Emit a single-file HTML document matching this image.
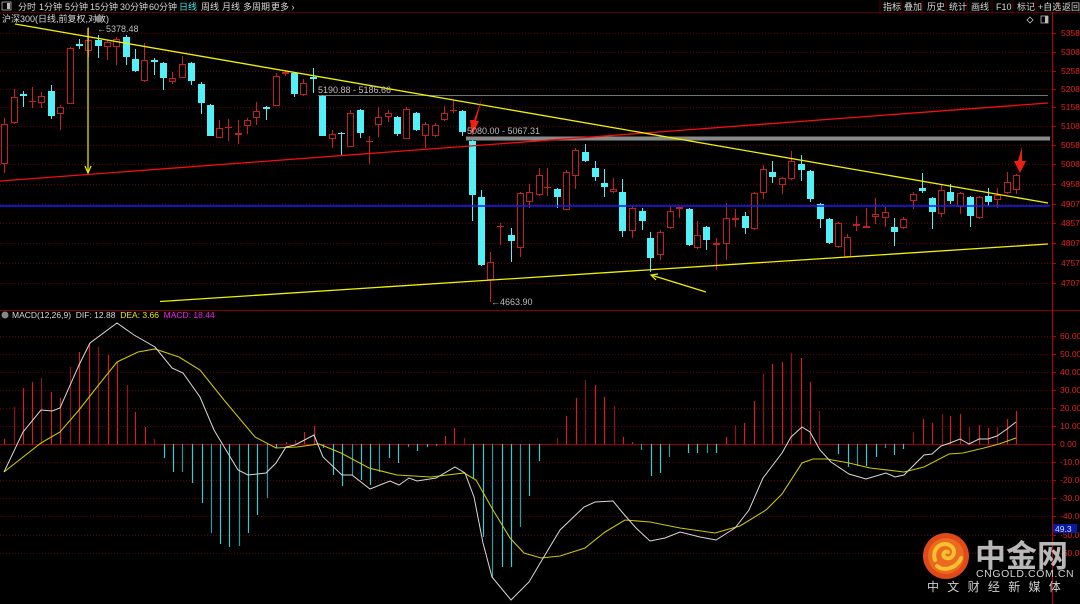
<!DOCTYPE html>
<html><head><meta charset="utf-8"><style>
html,body{margin:0;padding:0;background:#000;width:1080px;height:604px;overflow:hidden}
body{font-family:"Liberation Sans","Noto Sans CJK SC",sans-serif}
svg text{font-family:"Liberation Sans","Noto Sans CJK SC",sans-serif}
</style></head><body>
<svg id="s" width="1080" height="604" viewBox="0 0 1080 604" xmlns="http://www.w3.org/2000/svg">
<rect width="1080" height="604" fill="#000"/>
<g id="grid"></g>
<g id="bars"></g>
<g id="candles"></g>
<g id="over">
 <rect x="0" y="0" width="1080" height="12" fill="#000"/>
 <line x1="0" y1="12.5" x2="1080" y2="12.5" stroke="#5a0000"/>
 <rect x="2" y="2" width="9" height="8" fill="none" stroke="#bbb" stroke-width="0.8"/>
 <rect x="7" y="3" width="3" height="6" fill="#bbb"/>
 <g font-size="9" fill="#d8d8d8">
  <text x="18" y="10">分时</text><text x="39" y="10">1分钟</text><text x="65" y="10">5分钟</text><text x="90" y="10">15分钟</text><text x="120" y="10">30分钟</text><text x="149" y="10">60分钟</text>
  <text x="179" y="10" fill="#3ee8ee">日线</text><text x="201" y="10">周线</text><text x="222" y="10">月线</text><text x="243" y="10">多周期</text><text x="271" y="10">更多 ›</text>
 </g>
 <g font-size="9" fill="#d8d8d8" stroke="#5a0000">
  <line x1="880" y1="0" x2="880" y2="12"/><line x1="901" y1="0" x2="901" y2="12"/><line x1="922" y1="0" x2="922" y2="12"/><line x1="946" y1="0" x2="946" y2="12"/><line x1="967" y1="0" x2="967" y2="12"/><line x1="992" y1="0" x2="992" y2="12"/><line x1="1013" y1="0" x2="1013" y2="12"/><line x1="1036" y1="0" x2="1036" y2="12"/><line x1="1059" y1="0" x2="1059" y2="12"/>
  <text x="883" y="10" stroke="none">指标</text><text x="904" y="10" stroke="none">叠加</text><text x="927" y="10" stroke="none">历史</text><text x="949" y="10" stroke="none">统计</text><text x="971" y="10" stroke="none">画线</text><text x="996" y="10" stroke="none">F10</text><text x="1017" y="10" stroke="none">标记</text><text x="1038" y="10" stroke="none">+自选</text><text x="1062" y="10" stroke="none">返回</text>
 </g>
 <text x="2" y="22" font-size="9" fill="#d8d8d8">沪深300(日线,前复权,对数)</text>
 <circle cx="99" cy="19" r="3.5" fill="#888"/>
 <path d="M1030 17 l3 3 -3 3 -3 -3z" fill="none" stroke="#bbb" stroke-width="0.8"/>
 <rect x="1041" y="16" width="7" height="7" fill="none" stroke="#bbb" stroke-width="0.8"/><rect x="1045" y="16" width="3" height="7" fill="#bbb"/>
 <line x1="318" y1="95.5" x2="1048" y2="95.5" stroke="#9a9a9a" stroke-width="0.8"/>
 <rect x="466" y="136.5" width="584" height="4" fill="#8a8a8a"/>
 <line x1="0" y1="206" x2="1050" y2="206" stroke="#1020ff" stroke-width="1.5"/>
 <line x1="0" y1="181" x2="1048" y2="103" stroke="#f01010" stroke-width="1.3"/>
 <line x1="15" y1="24" x2="1048" y2="203" stroke="#f0f000" stroke-width="1.3"/>
 <line x1="160" y1="301.5" x2="1048" y2="244" stroke="#f0f000" stroke-width="1.3"/>
 <line x1="88" y1="28" x2="88" y2="172" stroke="#f0f000" stroke-width="1.2"/>
 <path d="M85 166 L88 173 L91 166" fill="none" stroke="#f0f000" stroke-width="1.2"/>
 <line x1="706" y1="292" x2="651" y2="275" stroke="#f0f000" stroke-width="1.3"/>
 <path d="M658 274 L651 275 L656 280" fill="none" stroke="#f0f000" stroke-width="1.2"/>
 <path d="M482 98 L476 121 L479 121 L472 136 L470 120 L474 120 Z" fill="#f02010"/>
 <path d="M1022 147 L1022 161 L1026 161 L1020 173 L1014 161 L1018 161 Z" fill="#f02010"/>
 <g font-size="9" fill="#bdbdbd">
  <text x="97" y="32">←5378.48</text>
  <text x="318" y="93">5190.88 - 5186.66</text>
  <text x="467" y="134">5080.00 - 5067.31</text>
  <text x="491" y="305">←4663.90</text>
 </g>
 <line x1="0" y1="310.5" x2="1080" y2="310.5" stroke="#8a0000"/>
 <line x1="1052.5" y1="12" x2="1052.5" y2="604" stroke="#c00000"/>
 <circle cx="5" cy="315" r="3.5" fill="#888"/>
 <text x="12" y="318" font-size="8.5" fill="#d8d8d8">MACD(12,26,9) &#160;DIF: 12.88 &#160;<tspan fill="#e8e800">DEA: 3.66</tspan> &#160;<tspan fill="#ee22ee">MACD: 18.44</tspan></text>
 <rect x="1053" y="524" width="24" height="9" fill="#0a1aa0"/>
 <text x="1055" y="532" font-size="8.5" fill="#d8d8ff">49.3</text>
 <circle cx="946" cy="556" r="23" fill="#e04a18"/>
 <circle cx="946" cy="556" r="18" fill="#ea6a20"/>
 <path d="M935 560 C931 548 943 540 951 546 C957 551 953 560 946 558 C941 556 944 550 948 552 M937 566 C944 572 957 568 961 558" fill="none" stroke="#f7c030" stroke-width="4" stroke-linecap="round"/>
 <text x="975" y="567" font-size="31" font-weight="bold" fill="#b8b8b8" font-family="'Noto Sans CJK SC',sans-serif">中金网</text>
 <text x="976" y="577" font-size="10.5" fill="#d0d0d0" letter-spacing="0.6">CNGOLD.COM.CN</text>
 <text x="927" y="591" font-size="12" fill="#d0d0d0" letter-spacing="8.3" font-family="'Noto Sans CJK SC',sans-serif">中文财经新媒体</text>
</g>
</svg>
<script>
var NS="http://www.w3.org/2000/svg";
function el(p,t,a){var e=document.createElementNS(NS,t);for(var k in a)e.setAttribute(k,a[k]);p.appendChild(e);return e;}
var G=document.getElementById('grid');
var pl=[[33,5358],[52,5308],[71,5258],[89,5208],[107,5158],[126,5108],[145,5058],[164,5008],[184,4958],[204,4907],[223,4857],[243,4807],[263,4757],[283,4707]];
pl.forEach(function(p){el(G,'line',{x1:0,y1:p[0]+.5,x2:1052,y2:p[0]+.5,stroke:'#6a0000','stroke-dasharray':'1,2'});el(G,'line',{x1:1052,y1:p[0]+.5,x2:1056,y2:p[0]+.5,stroke:'#c00000'});var t=el(G,'text',{x:1061,y:p[0]+3,'font-size':8.5,fill:'#e02020'});t.textContent=p[1];});
var ml=[[336,'60.00'],[354,'50.00'],[372,'40.00'],[390,'30.00'],[408,'20.00'],[426,'10.00'],[444,'0.00'],[462,'-10.00'],[480,'-20.00'],[498,'-30.00'],[516,'-40.00'],[535,'-50.00'],[553,'-60.00']];
ml.forEach(function(p){if(p[0]!=444)el(G,'line',{x1:0,y1:p[0]+.5,x2:1052,y2:p[0]+.5,stroke:'#6a0000','stroke-dasharray':'1,2'});el(G,'line',{x1:1052,y1:p[0]+.5,x2:1056,y2:p[0]+.5,stroke:'#c00000'});var t=el(G,'text',{x:1060,y:p[0]+3,'font-size':8.5,fill:'#e02020'});t.textContent=p[1];});
el(G,'line',{x1:0,y1:444.5,x2:1052,y2:444.5,stroke:'#a00000'});
var C=[[4,'r',124,164,118,173],[14,'r',97,123,89,124],[23,'c',94,96,91,107],[32,'x',101,101,87,108],[41,'r',96,103,92,108],[51,'c',91,116,85,119],[60,'r',107,114,105,130],[70,'r',48,104,47,104],[79,'c',44,46,39,49],[88,'r',40,51,27,57],[98,'c',40,46,35,58],[107,'r',42,47,40,60],[116,'r',39,47,37,65],[126,'c',37,57,35,65],[135,'c',59,71,49,72],[144,'r',60,81,43,82],[154,'c',60,62,58,75],[163,'c',63,78,62,90],[172,'r',78,82,72,84],[182,'r',64,78,56,78],[191,'c',63,81,62,85],[201,'c',84,103,82,114],[210,'c',105,136,104,136],[219,'r',128,138,120,138],[228,'x',127,127,119,141],[238,'r',133,134,120,144],[247,'r',120,126,118,134],[256,'r',111,118,102,125],[266,'c',107,109,106,120],[276,'r',76,106,73,106],[285,'r',72,74,70,76],[294,'c',73,94,72,97],[303,'r',83,95,79,96],[313,'c',77,79,68,93],[322,'c',96,136,95,136],[332,'r',134,139,130,148],[341,'c',133,134,132,155],[350,'r',113,147,110,147],[360,'c',110,133,109,138],[369,'x',141,141,136,164],[378,'r',117,125,107,137],[388,'r',113,117,110,122],[397,'c',117,134,116,136],[406,'r',109,139,107,139],[416,'c',113,130,112,131],[425,'r',124,136,122,148],[435,'r',125,136,123,137],[444,'r',113,120,106,121],[453,'x',110,110,100,113],[462,'c',111,132,110,136],[472,'c',141,195,140,221],[481,'c',197,265,190,266],[490,'r',262,280,252,302],[500,'x',226,226,223,245],[511,'c',235,241,228,262],[520,'r',193,248,192,257],[529,'r',192,202,184,208],[539,'r',175,195,168,196],[547,'x',187,187,168,196],[557,'c',189,197,188,208],[566,'r',172,210,170,210],[575,'r',150,176,148,189],[585,'c',152,161,144,162],[595,'c',168,177,161,181],[604,'c',183,187,169,197],[613,'r',189,192,178,193],[622,'c',192,231,179,237],[632,'r',208,231,206,238],[642,'c',211,221,208,230],[650,'c',238,258,232,272],[660,'r',232,255,230,260],[670,'r',211,228,206,229],[679,'r',207,209,206,218],[689,'c',209,245,208,246],[697,'r',235,248,221,249],[706,'c',227,240,226,250],[716,'r',243,245,238,270],[726,'r',218,244,203,260],[735,'r',218,219,209,227],[745,'c',216,228,212,234],[754,'r',193,229,192,230],[763,'r',169,193,165,199],[772,'c',172,177,161,183],[782,'r',178,185,177,194],[791,'r',161,179,151,180],[801,'c',164,170,155,181],[810,'c',171,199,170,202],[820,'c',204,219,203,228],[829,'c',219,243,218,244],[838,'r',223,247,222,248],[847,'r',237,257,234,258],[856,'r',224,226,216,231],[866,'r',226,227,208,228],[875,'r',214,217,198,224],[885,'r',212,218,207,227],[894,'c',227,232,218,246],[903,'r',219,228,217,229],[913,'r',194,201,192,209],[922,'c',188,191,173,193],[932,'c',198,212,197,229],[941,'r',190,214,185,217],[950,'c',192,201,184,204],[960,'r',193,207,192,214],[970,'c',197,216,196,227],[979,'r',197,218,196,219],[988,'c',196,202,188,206],[997,'r',195,200,188,208],[1007,'r',182,193,172,194],[1016,'r',175,190,174,194]];
var K=document.getElementById('candles');
C.forEach(function(c){var x=c[0];
 el(K,'line',{x1:x+.5,y1:c[4],x2:x+.5,y2:c[5],stroke:c[1]=='c'?'#54f0f8':'#c82020'});
 if(c[1]=='c'){el(K,'rect',{x:x-3,y:c[2],width:7,height:Math.max(1,c[3]-c[2]),fill:'#54f0f8'});}
 else if(c[1]=='x'){el(K,'line',{x1:x-3,y1:c[2]+.5,x2:x+4,y2:c[2]+.5,stroke:'#c82020'});}
 else{el(K,'rect',{x:x-2.5,y:c[2]+.5,width:6,height:Math.max(1,c[3]-c[2]-1),fill:'#000',stroke:'#c02020','stroke-width':1});}
});
var B=[[4,439],[14,407],[23,388],[32,382],[41,378],[51,392],[60,398],[70,367],[79,352],[89,343],[98,347],[108,355],[117,362],[127,385],[135,412],[145,427],[154,439],[164,458],[173,472],[182,472],[192,483],[202,503],[211,533],[220,544],[229,547],[239,546],[248,533],[257,515],[267,498],[276,448],[286,442],[295,440],[304,432],[314,426],[323,448],[333,475],[342,486],[352,475],[361,480],[370,485],[379,472],[389,458],[398,463],[408,447],[417,451],[427,447],[436,446],[445,436],[454,428],[464,438],[473,478],[483,537],[492,578],[502,567],[511,567],[520,527],[529,496],[539,461],[557,438],[566,416],[576,398],[585,380],[595,385],[604,397],[614,406],[623,437],[632,442],[641,450],[651,476],[660,473],[669,457],[688,453],[697,453],[707,453],[716,453],[726,437],[735,425],[744,423],[754,401],[763,374],[772,364],[782,362],[791,353],[801,358],[810,382],[819,411],[838,454],[848,467],[857,466],[866,466],[876,457],[885,448],[894,455],[903,449],[913,432],[923,419],[932,423],[942,414],[950,416],[960,414],[969,427],[979,425],[988,428],[997,427],[1007,419],[1016,411]];
var BB=document.getElementById('bars');
B.forEach(function(b,i){var up=b[1]<444;el(BB,'line',{x1:b[0]+.5,y1:444,x2:b[0]+.5,y2:b[1],stroke:up?(i%3==1?'#8a1818':'#d02020'):(i%3==1?'#2a9aa0':'#40c8d0'),'stroke-width':1.2});});
var dif=[[4,472],[23,432],[41,410],[52,411],[60,408],[79,365],[90,343],[117,323],[134,335],[155,347],[172,368],[183,373],[200,397],[214,430],[238,470],[248,475],[266,473],[276,463],[286,447],[295,445],[314,435],[323,457],[342,475],[352,475],[370,489],[390,481],[399,485],[409,478],[417,481],[436,478],[455,467],[465,473],[474,497],[483,543],[492,577],[511,600],[529,582],[539,565],[560,530],[584,507],[595,502],[613,501],[622,512],[636,528],[650,541],[665,538],[680,532],[700,537],[716,540],[735,528],[749,510],[763,478],[782,453],[791,437],[802,427],[810,432],[820,450],[831,462],[849,474],[866,479],[886,473],[895,477],[904,475],[924,455],[932,454],[941,446],[950,443],[960,439],[969,444],[979,439],[988,439],[997,436],[1007,429],[1016,422]];
var dea=[[4,472],[41,443],[60,432],[79,410],[97,387],[117,362],[138,352],[155,349],[179,357],[200,370],[224,400],[255,437],[276,448],[297,447],[319,444],[341,453],[369,468],[397,475],[431,477],[464,473],[476,480],[493,510],[510,538],[524,553],[541,558],[560,556],[585,548],[605,532],[625,520],[650,522],[680,528],[715,533],[740,526],[766,510],[782,494],[802,463],[813,459],[827,459],[849,463],[870,468],[904,472],[924,467],[949,454],[963,453],[984,448],[999,444],[1016,438]];
function path(p){return 'M'+p.map(function(q){return q[0]+' '+q[1];}).join(' L');}
var O=document.getElementById('over');
el(O,'path',{d:path(dea),fill:'none',stroke:'#c8c800','stroke-width':1.1});
el(O,'path',{d:path(dif),fill:'none',stroke:'#d8d8d8','stroke-width':1});
</script>
</body></html>
